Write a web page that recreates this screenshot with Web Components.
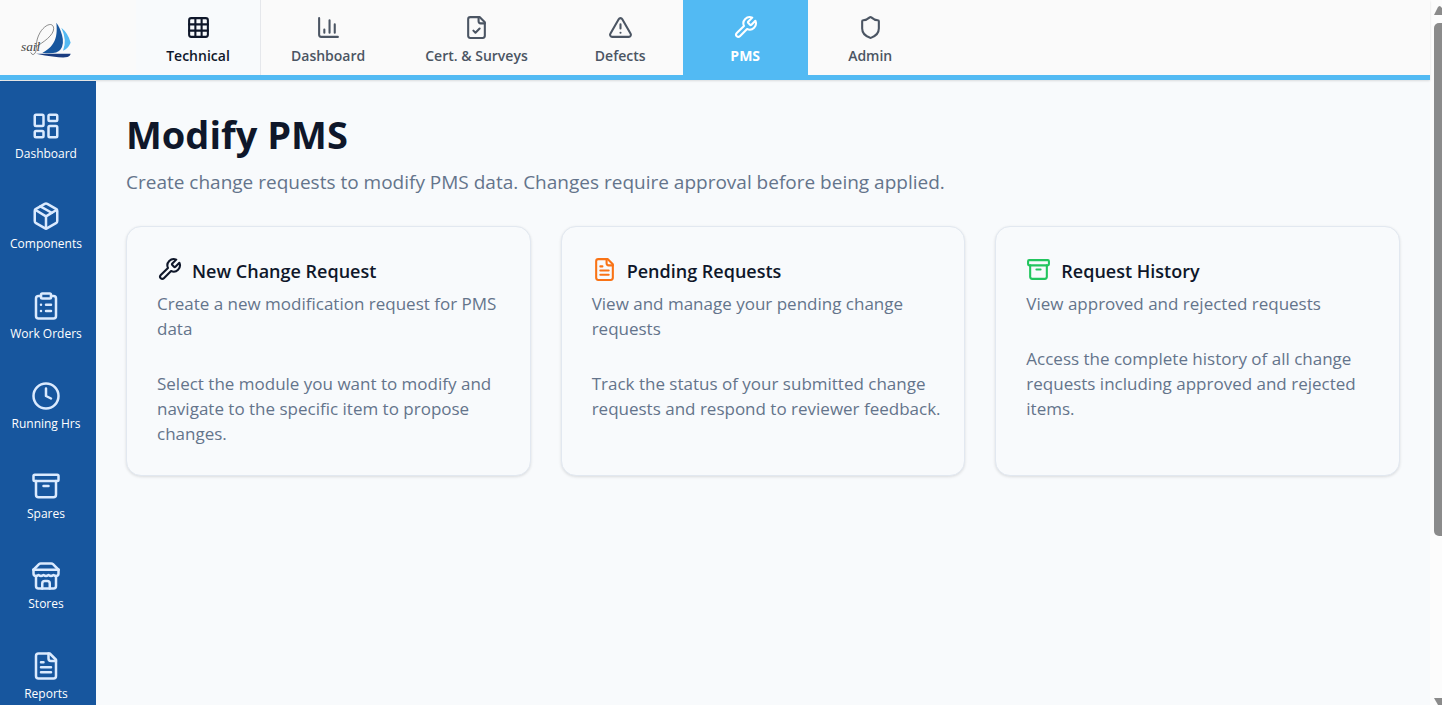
<!DOCTYPE html>
<html lang="en">
<head>
<meta charset="utf-8">
<meta name="viewport" content="width=device-width, initial-scale=1">
<title>Modify PMS</title>
<style>
  html, body { margin: 0; height: 100%; }
  body { font-family: "Open Sans", "Noto Sans", sans-serif; color: #0f172a; background: #fafafa; overflow: hidden; }
</style>
</head>
<body>
<pms-app></pms-app>

<script>
const ICONS = {
  grid: '<rect width="18" height="18" x="3" y="3" rx="2"/><path d="M3 9h18M3 15h18M9 3v18M15 3v18"/>',
  chart: '<path d="M3 3v16a2 2 0 0 0 2 2h16"/><path d="M18 17V9M13 17V5M8 17v-3"/>',
  filecheck: '<path d="M15 2H6a2 2 0 0 0-2 2v16a2 2 0 0 0 2 2h12a2 2 0 0 0 2-2V7Z"/><path d="M14 2v4a2 2 0 0 0 2 2h4"/><path d="m9 15 2 2 4-4"/>',
  alert: '<path d="m21.73 18-8-14a2 2 0 0 0-3.48 0l-8 14A2 2 0 0 0 4 21h16a2 2 0 0 0 1.73-3Z"/><path d="M12 9v4M12 17h.01"/>',
  wrench: '<path d="M14.7 6.3a1 1 0 0 0 0 1.4l1.6 1.6a1 1 0 0 0 1.4 0l3.77-3.77a6 6 0 0 1-7.94 7.94l-6.91 6.91a2.12 2.12 0 0 1-3-3l6.91-6.91a6 6 0 0 1 7.94-7.94l-3.76 3.76z"/>',
  shield: '<path d="M20 13c0 5-3.5 7.5-7.66 8.95a1 1 0 0 1-.67-.01C7.5 20.5 4 18 4 13V6a1 1 0 0 1 1-1c2 0 4.5-1.2 6.24-2.72a1.17 1.17 0 0 1 1.52 0C14.51 3.81 17 5 19 5a1 1 0 0 1 1 1z"/>',
  dashboard: '<rect width="7" height="9" x="3" y="3" rx="1"/><rect width="7" height="5" x="14" y="3" rx="1"/><rect width="7" height="9" x="14" y="12" rx="1"/><rect width="7" height="5" x="3" y="16" rx="1"/>',
  box: '<path d="M11 21.73a2 2 0 0 0 2 0l7-4A2 2 0 0 0 21 16V8a2 2 0 0 0-1-1.73l-7-4a2 2 0 0 0-2 0l-7 4A2 2 0 0 0 3 8v8a2 2 0 0 0 1 1.73z"/><path d="M12 22V12"/><path d="m3.3 7 7.703 4.734a2 2 0 0 0 1.994 0L20.7 7"/><path d="m7.5 4.27 9 5.15"/>',
  clipboard: '<rect width="8" height="4" x="8" y="2" rx="1"/><path d="M16 4h2a2 2 0 0 1 2 2v14a2 2 0 0 1-2 2H6a2 2 0 0 1-2-2V6a2 2 0 0 1 2-2h2"/><path d="M12 11h4M12 16h4M8 11h.01M8 16h.01"/>',
  clock: '<circle cx="12" cy="12" r="10"/><path d="M12 6v6l4 2"/>',
  archive: '<rect width="20" height="5" x="2" y="3" rx="1"/><path d="M4 8v11a2 2 0 0 0 2 2h12a2 2 0 0 0 2-2V8"/><path d="M10 12h4"/>',
  store: '<path d="m2 7 4.41-4.41A2 2 0 0 1 7.83 2h8.34a2 2 0 0 1 1.42.59L22 7"/><path d="M4 12v8a2 2 0 0 0 2 2h12a2 2 0 0 0 2-2v-8"/><path d="M15 22v-4a2 2 0 0 0-2-2h-2a2 2 0 0 0-2 2v4"/><path d="M2 7h20"/><path d="M22 7v3a2 2 0 0 1-2 2a2.7 2.7 0 0 1-1.59-.63.7.7 0 0 0-.82 0A2.7 2.7 0 0 1 16 12a2.7 2.7 0 0 1-1.59-.63.7.7 0 0 0-.82 0A2.7 2.7 0 0 1 12 12a2.7 2.7 0 0 1-1.59-.63.7.7 0 0 0-.82 0A2.7 2.7 0 0 1 8 12a2.7 2.7 0 0 1-1.59-.63.7.7 0 0 0-.82 0A2.7 2.7 0 0 1 4 12a2 2 0 0 1-2-2V7"/>',
  filetext: '<path d="M15 2H6a2 2 0 0 0-2 2v16a2 2 0 0 0 2 2h12a2 2 0 0 0 2-2V7Z"/><path d="M14 2v4a2 2 0 0 0 2 2h4"/><path d="M10 9H8M16 13H8M16 17H8"/>'
};

// Registers an element whose shadow root is filled from render(host).
function element(name, render) {
  customElements.define(name, class extends HTMLElement {
    connectedCallback() {
      if (this.shadowRoot) return;
      const tpl = document.createElement('template');
      tpl.innerHTML = render(this);
      this.attachShadow({ mode: 'open' }).append(tpl.content.cloneNode(true));
    }
  });
}

element('line-icon', host => `
  <style>
    :host { display: block; flex: none; width: 25px; height: 25px; }
    svg { display: block; width: 100%; height: 100%; }
  </style>
  <svg viewBox="0 0 24 24" fill="none" stroke="currentColor" stroke-width="2" stroke-linecap="round" stroke-linejoin="round" aria-hidden="true">${ICONS[host.getAttribute('name')]}</svg>`);

element('sail-logo', () => `
  <style>
    :host { display: block; flex: none; width: 80px; height: 60px; }
    svg { display: block; width: 100%; height: 100%; }
    text { font: italic 40px "Liberation Serif", serif; fill: #444; }
  </style>
  <svg viewBox="0 0 240 180" role="img" aria-label="sail">
    <path d="M139 38C143 75 138 108 97 128Q138 134 151 119Q164 103 156 75Q150 52 139 38Z" fill="#17569e"/>
    <path d="M154 53Q172 91 159 122Q174 116 182 98Q175 70 154 53Z" fill="#53b9f2"/>
    <path d="M78 131Q137 131 182 131Q180 141 166 142Q145 144 78 131Z" fill="#1a3c80"/>
    <path d="M78 110C98 98 132 76 131 55C129 34 104 44 90 68C74 96 82 113 77 126Q69 141 62 127" fill="none" stroke="#555" stroke-width="2"/>
    <text x="33" y="124">sail</text>
  </svg>`);

element('nav-tab', host => `
  <style>
    :host { display: flex; }
    a { box-sizing: border-box; min-width: 125px; padding: 15px 30px 0; display: flex; flex-direction: column; align-items: center; gap: 5px;
        color: #4b5563; text-decoration: none; font-size: 14px; line-height: 22px; font-weight: 600; white-space: nowrap; }
    :host([module]) a { color: #0f172a; background: #f8fafc; border-right: 1px solid #e5e7eb; }
    :host([active]) a { color: #fff; background: #52baf3; font-weight: 700; }
  </style>
  <a href="#" ${host.hasAttribute('active') ? 'aria-current="page"' : ''}><line-icon name="${host.getAttribute('icon')}"></line-icon><slot></slot></a>`);

element('top-bar', () => `
  <style>
    :host { display: block; position: relative; z-index: 1; background: #fafafa; border-bottom: 5px solid #52baf3; box-shadow: 0 1px 2px rgba(0,0,0,.12); }
    header { display: flex; min-height: 75px; }
    .brand { display: flex; align-items: center; padding: 5px 46px 0 10px; }
    nav { display: flex; }
  </style>
  <header>
    <div class="brand"><sail-logo></sail-logo></div>
    <nav aria-label="Modules">
      <nav-tab icon="grid" module>Technical</nav-tab>
      <nav-tab icon="chart">Dashboard</nav-tab>
      <nav-tab icon="filecheck">Cert. &amp; Surveys</nav-tab>
      <nav-tab icon="alert">Defects</nav-tab>
      <nav-tab icon="wrench" active>PMS</nav-tab>
      <nav-tab icon="shield">Admin</nav-tab>
    </nav>
  </header>`);

element('side-link', host => `
  <style>
    :host { display: block; }
    a { display: flex; flex-direction: column; align-items: center; gap: 4px; padding: 15px 0 23px; color: #fff; text-decoration: none;
        font-size: 12px; line-height: 18px; white-space: nowrap; }
    line-icon { width: 30px; height: 30px; color: #dbeafe; }
  </style>
  <a href="#"><line-icon name="${host.getAttribute('icon')}"></line-icon><slot></slot></a>`);

element('side-bar', () => `
  <style>
    :host { display: block; flex: none; box-sizing: border-box; width: 96px; margin-top: 1px; padding: 15px 4px 0 0; background: #17569e; overflow: hidden; }
  </style>
  <nav aria-label="PMS">
    <side-link icon="dashboard">Dashboard</side-link>
    <side-link icon="box">Components</side-link>
    <side-link icon="clipboard">Work Orders</side-link>
    <side-link icon="clock">Running Hrs</side-link>
    <side-link icon="archive">Spares</side-link>
    <side-link icon="store">Stores</side-link>
    <side-link icon="filetext">Reports</side-link>
  </nav>`);

element('request-card', host => `
  <style>
    :host { display: block; box-sizing: border-box; padding: 30px 20px 29px 30px; border: 1px solid #e2e8f0; border-radius: 15px; background: #f8fafc;
            box-shadow: 0 1px 3px rgba(0,0,0,.12); color: #64748b; font-size: 17px; line-height: 25px; }
    .head { display: flex; align-items: flex-start; gap: 10px; margin-bottom: 6px; }
    h2 { margin: 0; font-size: 18px; line-height: 28px; font-weight: 600; color: #0f172a; }
    p { margin: 0; }
    p + p { margin-top: 30px; }
    line-icon { color: ${host.getAttribute('tone')}; }
  </style>
  <div class="head"><line-icon name="${host.getAttribute('icon')}"></line-icon><h2><slot name="title"></slot></h2></div>
  <p><slot name="summary"></slot></p>
  <p><slot></slot></p>`);

element('modify-page', () => `
  <style>
    :host { display: block; flex: 1; min-width: 0; box-sizing: border-box; padding: 30px; background: #f8fafc; overflow: hidden; }
    h1 { margin: 0 0 9px; font-size: 38px; line-height: 48px; font-weight: 700; }
    p { margin: 0 0 29px; font-size: 19px; line-height: 30px; color: #64748b; }
    .cards { display: grid; grid-template-columns: repeat(auto-fit, minmax(300px, 1fr)); gap: 30px; }
  </style>
  <main>
    <h1>Modify PMS</h1>
    <p>Create change requests to modify PMS data. Changes require approval before being applied.</p>
    <div class="cards">
      <request-card icon="wrench" tone="#0f172a">
        <span slot="title">New Change Request</span>
        <span slot="summary">Create a new modification request for PMS data</span>
        Select the module you want to modify and navigate to the specific item to propose changes.
      </request-card>
      <request-card icon="filetext" tone="#f97316">
        <span slot="title">Pending Requests</span>
        <span slot="summary">View and manage your pending change requests</span>
        Track the status of your submitted change requests and respond to reviewer feedback.
      </request-card>
      <request-card icon="archive" tone="#22c55e">
        <span slot="title">Request History</span>
        <span slot="summary">View approved and rejected requests</span>
        Access the complete history of all change requests including approved and rejected items.
      </request-card>
    </div>
  </main>`);

element('scroll-rail', () => `
  <style>
    :host { display: flex; flex-direction: column; flex: none; box-sizing: border-box; width: 12px; padding-left: 4px; background: #fcfcfc; overflow: hidden; color: #8b8b8b; }
    svg { display: block; flex: none; width: 8px; height: 10px; }
    .up { margin: 6px 0 7px; }
    .track { flex: 1; }
    .thumb { height: 76%; background: currentColor; border-radius: 5px 0 0 5px; }
    .down { height: 7px; }
  </style>
  <svg class="up" viewBox="0 0 8 10" aria-hidden="true"><path d="M0 9L4 1Q5 0 6 0L8 2V9Z" fill="currentColor"/></svg>
  <div class="track"><div class="thumb"></div></div>
  <svg class="down" viewBox="0 0 8 7" aria-hidden="true"><path d="M0 0H8V7H4Z" fill="currentColor"/></svg>`);

element('pms-app', () => `
  <style>
    :host { display: flex; height: 100vh; }
    .view { flex: 1; min-width: 0; display: flex; flex-direction: column; }
    .body { flex: 1; min-height: 0; display: flex; }
  </style>
  <div class="view">
    <top-bar></top-bar>
    <div class="body"><side-bar></side-bar><modify-page></modify-page></div>
  </div>
  <scroll-rail></scroll-rail>`);
</script>
</body>
</html>
